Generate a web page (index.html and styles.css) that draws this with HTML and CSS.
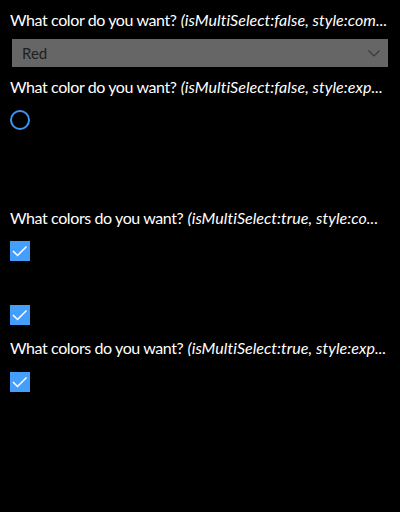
FILE: index.html
```html
<!DOCTYPE html>
<html>
<head>
<meta charset="utf-8">
<link rel="stylesheet" href="styles.css">
</head>
<body>
<div class="page">
  <div class="title t1"><span class="q">What color do you want?</span> <i>(isMultiSelect:false, style:com...</i></div>
  <div class="dropdown">
    <span class="dd-text">Red</span>
    <svg class="chev" width="12" height="7" viewBox="0 0 12 7"><path d="M0.5 0.5 L6 6 L11.5 0.5" fill="none" stroke="#3a3a3a" stroke-width="1.2"/></svg>
  </div>
  <div class="title t2"><span class="q">What color do you want?</span> <i>(isMultiSelect:false, style:exp...</i></div>
  <div class="radio r1"></div>
  <div class="title t3"><span class="q">What colors do you want?</span> <i>(isMultiSelect:true, style:co...</i></div>
  <div class="check c1"><svg width="20" height="20" viewBox="0 0 20 20"><path d="M3 10 L7.5 14.5 L16.5 5.5" fill="none" stroke="#fff" stroke-width="1.5"/></svg></div>
  <div class="check c2"><svg width="20" height="20" viewBox="0 0 20 20"><path d="M3 10 L7.5 14.5 L16.5 5.5" fill="none" stroke="#fff" stroke-width="1.5"/></svg></div>
  <div class="title t4"><span class="q">What colors do you want?</span> <i>(isMultiSelect:true, style:exp...</i></div>
  <div class="check c3"><svg width="20" height="20" viewBox="0 0 20 20"><path d="M3 10 L7.5 14.5 L16.5 5.5" fill="none" stroke="#fff" stroke-width="1.5"/></svg></div>
</div>
</body>
</html>
```
FILE: styles.css
```css
html, body {
  margin: 0;
  padding: 0;
  background: #000;
  height: 100%;
}
.page {
  display: flex;
  flex-direction: column;
  align-items: flex-start;
  padding: 10px 12px 0 10px;
  font-family: Lato, "Noto Sans", sans-serif;
  color: #fff;
}
.title {
  font-size: 16px;
  line-height: 20px;
  height: 20px;
  white-space: nowrap;
}
.q { letter-spacing: -0.4px; }
.title i { letter-spacing: 0.05px; }
.dropdown {
  margin-top: 9px;
  margin-left: 2px;
  width: 376px;
  height: 28px;
  background: #666666;
  display: flex;
  align-items: center;
  justify-content: space-between;
  box-sizing: border-box;
  padding: 0 8px 0 10px;
}
.dd-text {
  font-size: 15px;
  color: #1e1e1e;
}
.chev { margin-top: 1px; }
.t2 { margin-top: 10px; }
.radio {
  margin-top: 13px;
  width: 20px;
  height: 20px;
  box-sizing: border-box;
  border: 2px solid #3d95f5;
  border-radius: 50%;
}
.t3 { margin-top: 78px; }
.check {
  width: 20px;
  height: 20px;
  background: #449ffc;
}
.check svg { display: block; }
.c1 { margin-top: 13px; }
.c2 { margin-top: 44px; }
.t4 { margin-top: 13px; }
.c3 { margin-top: 14px; }
```
